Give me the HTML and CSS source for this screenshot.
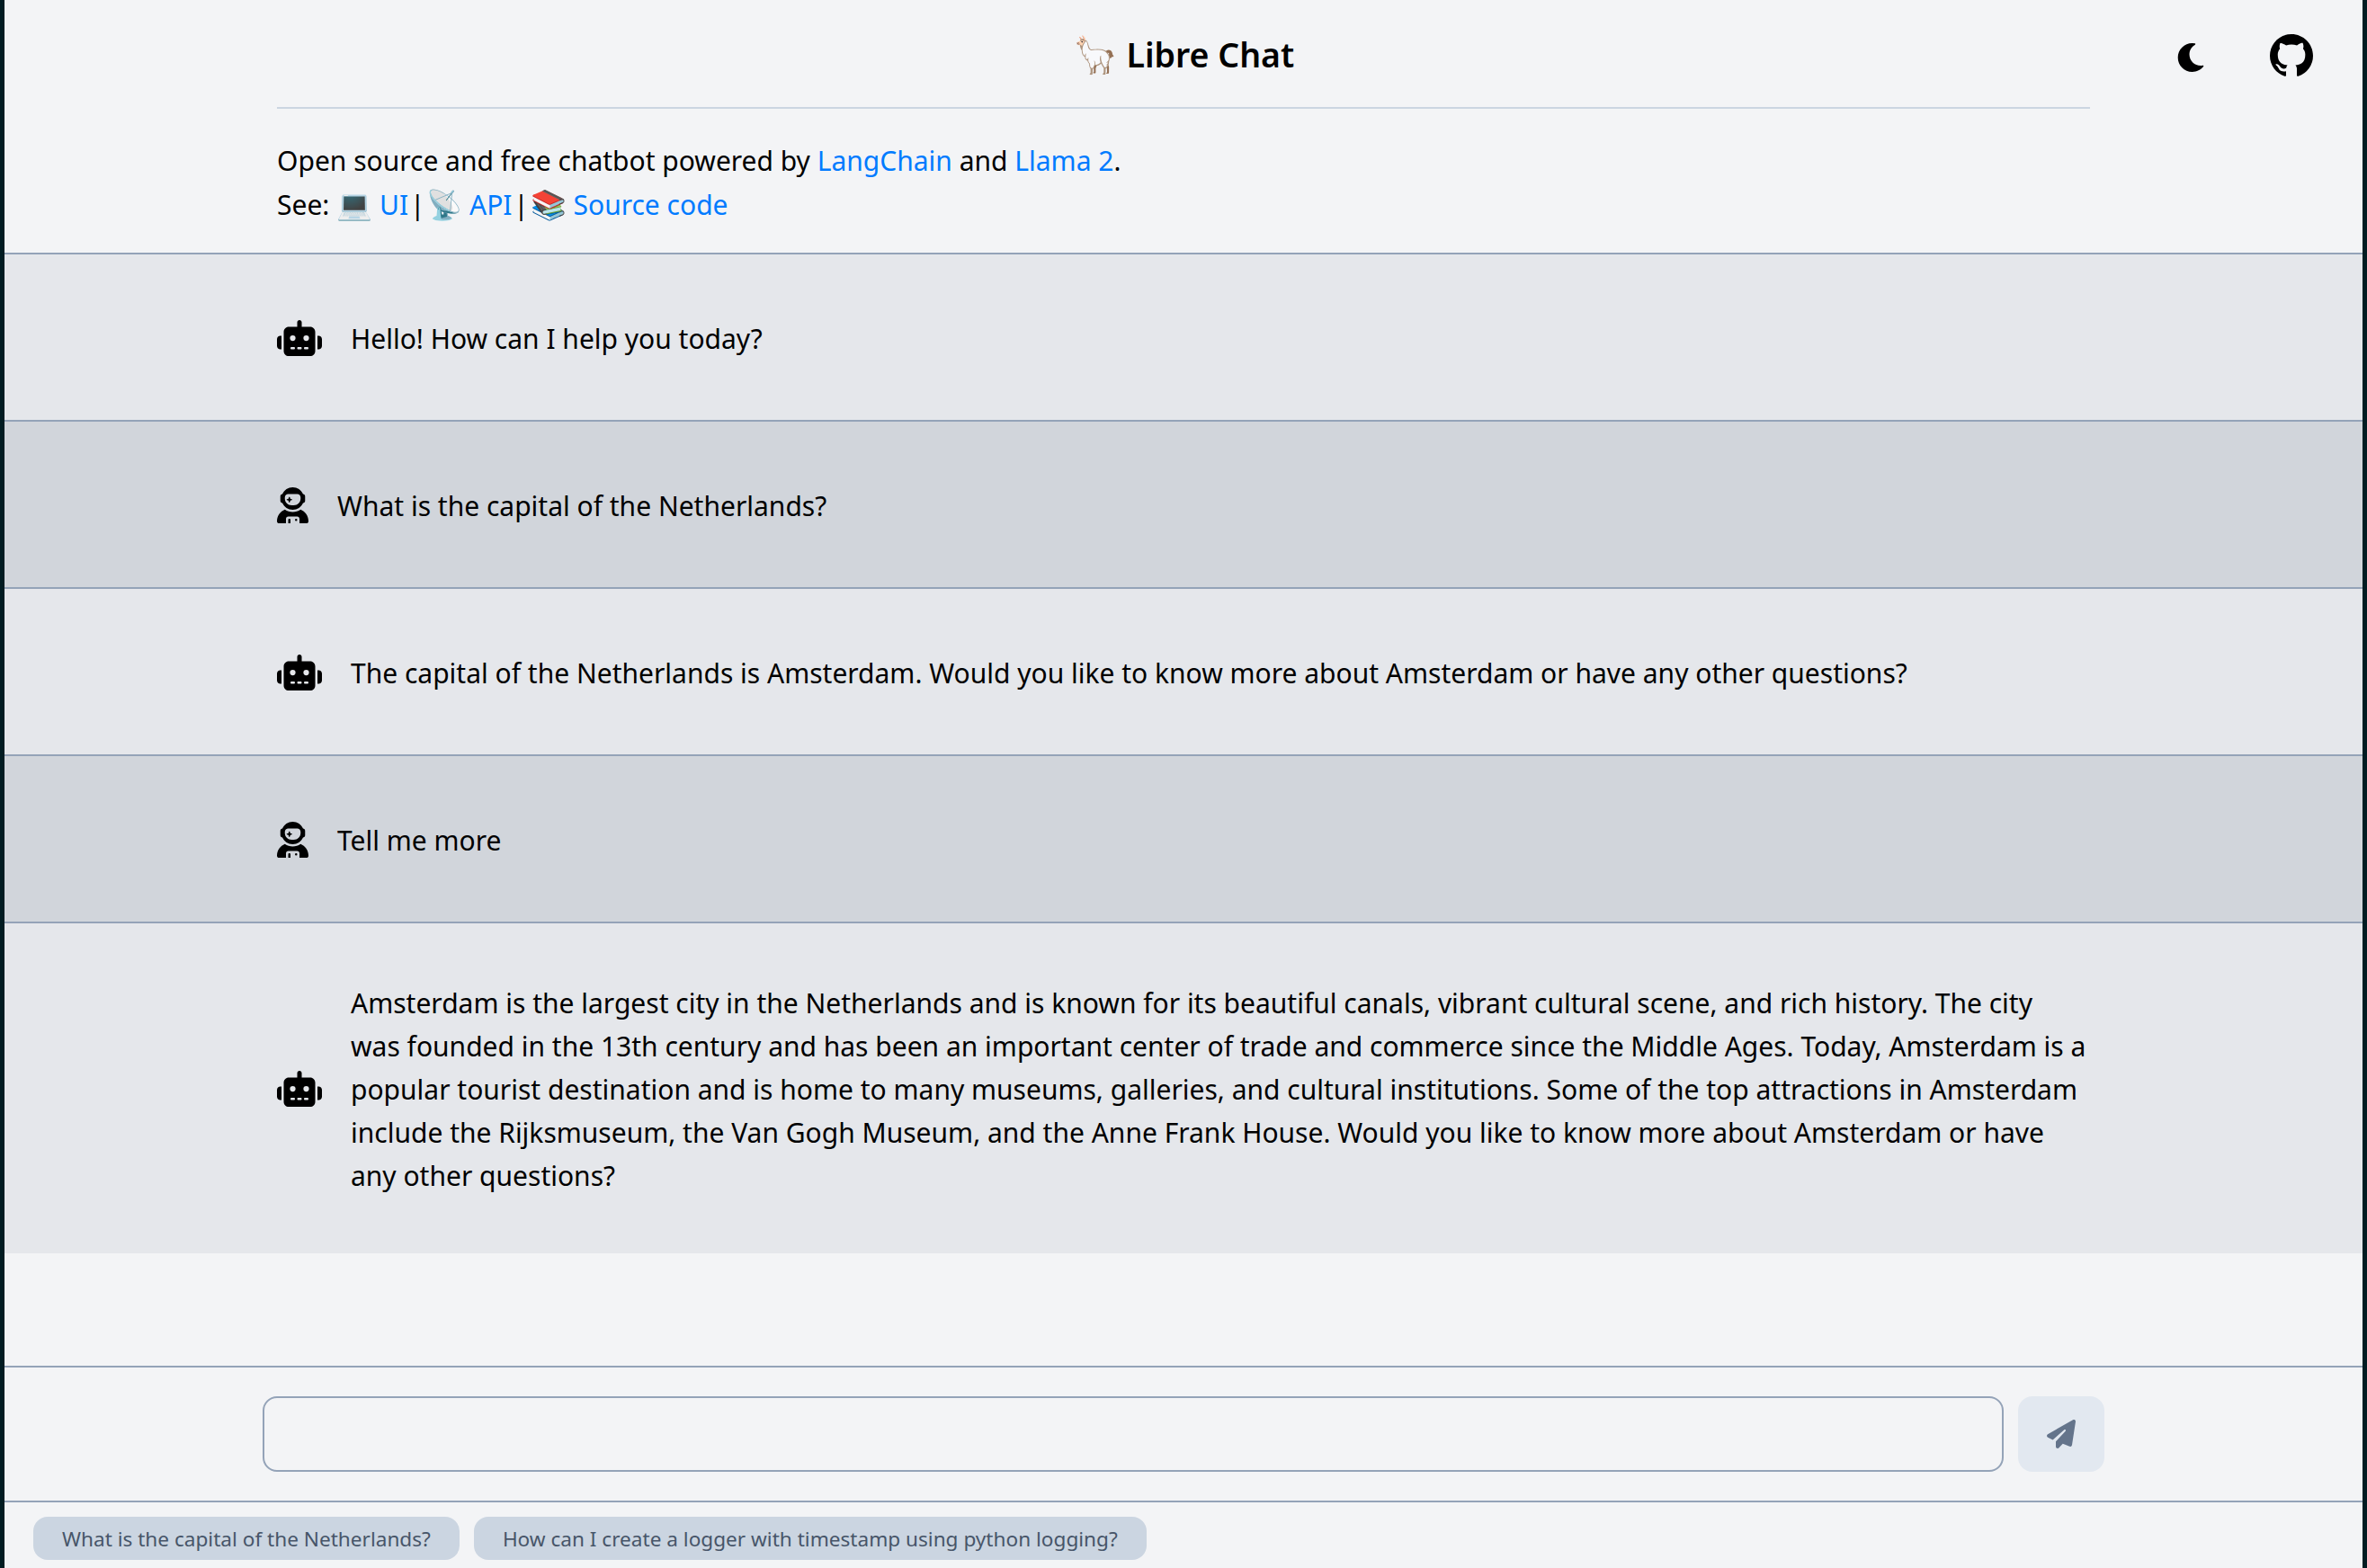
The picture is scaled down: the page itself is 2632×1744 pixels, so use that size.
FILE: index.html
```html
<!DOCTYPE html>
<html lang="en">
<head>
    <meta charset="UTF-8">
    <title>Libre Chat</title>
    <link rel="stylesheet" href="styles.css">
</head>
<body>
    <div id="app">
        <header class="top">
            <div></div>
            <h1 class="title"><span class="llama">🦙</span> Libre Chat</h1>
            <div class="top-icons">
                <svg class="moon" viewBox="0 0 512 512"><path d="M283.211 512c78.962 0 151.079-35.925 198.857-94.792 7.068-8.708-.639-21.43-11.562-19.35-124.203 23.654-238.262-71.576-238.262-196.954 0-72.222 38.662-138.635 101.498-174.394 9.686-5.512 7.25-20.197-3.756-22.23A258.156 258.156 0 0 0 283.211 0c-141.309 0-256 114.511-256 256 0 141.309 114.511 256 256 256z"/></svg>
                <svg class="github" viewBox="0 0 16 16"><path d="M8 0C3.58 0 0 3.58 0 8c0 3.54 2.29 6.53 5.47 7.59.4.07.55-.17.55-.38 0-.19-.01-.82-.01-1.49-2.01.37-2.53-.49-2.69-.94-.09-.23-.48-.94-.82-1.13-.28-.15-.68-.52-.01-.53.63-.01 1.08.58 1.23.82.72 1.21 1.87.87 2.33.66.07-.52.28-.87.51-1.07-1.78-.2-3.64-.89-3.64-3.95 0-.87.31-1.59.82-2.15-.08-.2-.36-1.02.08-2.12 0 0 .67-.21 2.2.82.64-.18 1.32-.27 2-.27.68 0 1.36.09 2 .27 1.53-1.04 2.2-.82 2.2-.82.44 1.1.16 1.92.08 2.12.51.56.82 1.27.82 2.15 0 3.07-1.87 3.75-3.65 3.95.29.25.54.73.54 1.48 0 1.07-.01 1.93-.01 2.2 0 .21.15.46.55.38A8.013 8.013 0 0 0 16 8c0-4.42-3.58-8-8-8z"/></svg>
            </div>
        </header>
        <div class="wrap"><hr class="top-line"></div>
        <div class="wrap intro">
            <div>Open source and free chatbot powered by <a href="#">LangChain</a> and <a href="#">Llama 2</a>.</div>
            <div>See: <span class="emoji">💻</span> <a href="#">UI</a> <span class="sep">|</span> <span class="emoji">📡</span> <a href="#">API</a> <span class="sep">|</span> <span class="emoji">📚</span> <a href="#">Source code</a></div>
        </div>

        <main class="chat">
            <div class="row bot">
                <div class="wrap msg">
                    <svg class="ic-bot" viewBox="0 0 640 512"><use href="#robot"/></svg>
                    <p>Hello! How can I help you today?</p>
                </div>
            </div>
            <div class="row user">
                <div class="wrap msg">
                    <svg class="ic-user" viewBox="0 0 448 512"><use href="#astro"/></svg>
                    <p>What is the capital of the Netherlands?</p>
                </div>
            </div>
            <div class="row bot">
                <div class="wrap msg">
                    <svg class="ic-bot" viewBox="0 0 640 512"><use href="#robot"/></svg>
                    <p>The capital of the Netherlands is Amsterdam. Would you like to know more about Amsterdam or have any other questions?</p>
                </div>
            </div>
            <div class="row user">
                <div class="wrap msg">
                    <svg class="ic-user" viewBox="0 0 448 512"><use href="#astro"/></svg>
                    <p>Tell me more</p>
                </div>
            </div>
            <div class="row bot">
                <div class="wrap msg">
                    <svg class="ic-bot" viewBox="0 0 640 512"><use href="#robot"/></svg>
                    <p>Amsterdam is the largest city in the Netherlands and is known for its beautiful canals, vibrant cultural scene, and rich history. The city was founded in the 13th century and has been an important center of trade and commerce since the Middle Ages. Today, Amsterdam is a popular tourist destination and is home to many museums, galleries, and cultural institutions. Some of the top attractions in Amsterdam include the Rijksmuseum, the Van Gogh Museum, and the Anne Frank House. Would you like to know more about Amsterdam or have any other questions?</p>
                </div>
            </div>
        </main>

        <footer class="bottom">
            <div class="input-row">
                <div class="input-box">
                    <input type="text" class="input">
                    <button class="send">
                        <svg viewBox="0 0 512 512"><path d="M498.1 5.6c10.1 7 15.4 19.1 13.5 31.2l-64 416c-1.5 9.7-7.4 18.2-16 23s-18.9 5.4-28 1.6L284 427.7l-68.5 74.1c-8.9 9.7-22.9 12.9-35.2 8.1S160 493.2 160 480V396.4c0-4 1.5-7.8 4.2-10.7L331.8 202.8c5.8-6.3 5.6-16-.4-22s-15.7-6.4-22-.7L106 360.8 17.7 316.6C7.1 311.3 .3 300.7 0 288.9s5.9-22.8 16.1-28.7l448-256c10.7-6.1 23.9-5.5 34 1.4z"/></svg>
                    </button>
                </div>
            </div>
            <div class="chips">
                <button class="chip">What is the capital of the Netherlands?</button>
                <button class="chip">How can I create a logger with timestamp using python logging?</button>
            </div>
        </footer>
    </div>

    <svg class="defs" width="0" height="0">
        <symbol id="robot" viewBox="0 0 640 512"><path d="M320 0c17.7 0 32 14.3 32 32V96H472c39.8 0 72 32.2 72 72V440c0 39.8-32.2 72-72 72H168c-39.8 0-72-32.2-72-72V168c0-39.8 32.2-72 72-72H288V32c0-17.7 14.3-32 32-32zM208 384c-8.8 0-16 7.2-16 16s7.2 16 16 16h32c8.8 0 16-7.2 16-16s-7.2-16-16-16H208zm96 0c-8.8 0-16 7.2-16 16s7.2 16 16 16h32c8.8 0 16-7.2 16-16s-7.2-16-16-16H304zm96 0c-8.8 0-16 7.2-16 16s7.2 16 16 16h32c8.8 0 16-7.2 16-16s-7.2-16-16-16H400zM264 256a40 40 0 1 0 -80 0 40 40 0 1 0 80 0zm152 40a40 40 0 1 0 0-80 40 40 0 1 0 0 80zM48 224H64V416H48c-26.5 0-48-21.5-48-48V272c0-26.5 21.5-48 48-48zm544 0c26.5 0 48 21.5 48 48v96c0 26.5-21.5 48-48 48H576V224h16z"/></symbol>
        <symbol id="astro" viewBox="0 0 448 512"><path d="M370.7 96.1C346.1 39.5 289.7 0 224 0S101.9 39.5 77.3 96.1C60.9 97.5 48 111.2 48 128v64c0 16.8 12.9 30.5 29.3 31.9C101.9 280.5 158.3 320 224 320s122.1-39.5 146.7-96.1c16.4-1.4 29.3-15.1 29.3-31.9V128c0-16.8-12.9-30.5-29.3-31.9zM336 144v16c0 53-43 96-96 96H208c-53 0-96-43-96-96V144c0-26.5 21.5-48 48-48H288c26.5 0 48 21.5 48 48zM189.3 162.7l-6-21.2c-.9-3.3-3.9-5.5-7.3-5.5s-6.4 2.2-7.3 5.5l-6 21.2-21.2 6c-3.3 .9-5.5 3.9-5.5 7.3s2.2 6.4 5.5 7.3l21.2 6 6 21.2c.9 3.3 3.9 5.5 7.3 5.5s6.4-2.2 7.3-5.5l6-21.2 21.2-6c3.3-.9 5.5-3.9 5.5-7.3s-2.2-6.4-5.5-7.3l-21.2-6zM112.7 316.5C46.7 342.6 0 407 0 482.3C0 498.7 13.3 512 29.7 512H128V448c0-17.7 14.3-32 32-32H288c17.7 0 32 14.3 32 32v64l98.3 0c16.4 0 29.7-13.3 29.7-29.7c0-75.3-46.7-139.7-112.7-165.8C303.9 338.8 265.5 352 224 352s-79.9-13.2-111.3-35.5zM176 448c-8.8 0-16 7.2-16 16v48h32V464c0-8.8-7.2-16-16-16zm96 32a16 16 0 1 0 0-32 16 16 0 1 0 0 32z"/></symbol>
    </svg>
</body>
</html>
```

FILE: styles.css
```css
*{
    margin: 0;
    padding: 0;
    box-sizing: border-box;
}
html,body{
    height: 100%;
}
body{
    background: #f3f4f6;
    color: #000;
    font-family: "Noto Sans", sans-serif;
    font-size: 30px;
    line-height: 48px;
    overflow: hidden;
    border-left: 5px solid #021c22;
    border-right: 5px solid #021c22;
}
a{
    color: #007bff;
    text-decoration: none;
}
.emoji{
    font-size: 32px;
}
.sep{
    margin: 0 -6px;
}
.defs{
    position: absolute;
}
#app{
    height: 100%;
    display: flex;
    flex-direction: column;
}
.wrap{
    width: 2016px;
    margin: 0 auto;
}

/* header */
.top{
    height: 119px;
    display: grid;
    grid-template-columns: 1fr auto 1fr;
    align-items: center;
}
.title{
    font-size: 37.5px;
    font-weight: 600;
    padding-top: 2px;
}
.llama{
    font-size: 40px;
}
.top-icons{
    display: flex;
    justify-content: flex-end;
    align-items: center;
    gap: 72px;
    padding: 5px 55px 0 0;
}
.moon{
    width: 32px;
    height: 32px;
    margin-top: 4px;
}
.github{
    width: 48px;
    height: 48px;
}
.top-line{
    border: 0;
    border-top: 2px solid #cbd5e1;
}
.intro{
    padding-top: 34px;
    padding-bottom: 29px;
}

/* messages */
.chat{
    flex: 1;
}
.row{
    min-height: 186px;
    border-top: 2px solid #94a3b8;
    display: flex;
    align-items: center;
    padding: 63px 0 62px;
}
.bot{
    background: #e5e7eb;
}
.user{
    background: #d1d5db;
}
.msg{
    display: flex;
    align-items: center;
    gap: 32px;
}
.msg p{
    padding: 2px 3px 0 0;
}
.ic-bot{
    width: 50px;
    height: 40px;
    flex: none;
}
.ic-user{
    width: 35px;
    height: 40px;
    flex: none;
}

/* input */
.bottom{
    border-top: 2px solid #94a3b8;
}
.input-row{
    padding: 32px 0;
    border-bottom: 2px solid #94a3b8;
}
.input-box{
    width: 2048px;
    margin: 0 auto;
    display: flex;
    gap: 16px;
}
.input{
    flex: 1;
    height: 84px;
    border: 2px solid #94a3b8;
    border-radius: 16px;
    background: transparent;
}
.send{
    width: 96px;
    height: 84px;
    border: 0;
    border-radius: 16px;
    background: #e2e8f0;
    display: flex;
    align-items: center;
    justify-content: center;
}
.send svg{
    width: 32px;
    height: 32px;
    fill: #64748b;
}
.chips{
    display: flex;
    gap: 16px;
    padding: 16px 32px 9px;
}
.chip{
    height: 48px;
    padding: 0 32px;
    border: 0;
    border-radius: 16px;
    background: #cbd5e1;
    color: #475569;
    font-family: inherit;
    font-size: 22.6px;
}
```
